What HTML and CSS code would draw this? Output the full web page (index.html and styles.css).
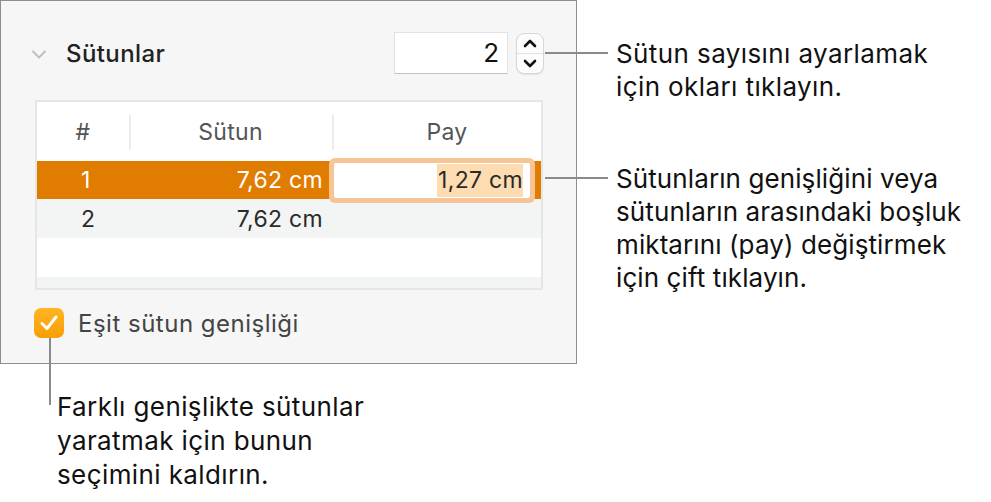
FILE: index.html
```html
<!DOCTYPE html>
<html lang="tr">
<head>
    <meta charset="UTF-8">
    <meta name="viewport" content="width=device-width, initial-scale=1.0">
    <title>Sütunlar</title>
    <link rel="stylesheet" href="styles.css">
</head>
<body>
    <div class="figure">
        <div class="panel">
            <div class="section-head">
                <svg class="disclosure" width="14" height="9" viewBox="0 0 14 9">
                    <path d="M1 1.5 L7 7.5 L13 1.5" fill="none" stroke="#bdbdbd" stroke-width="1.8" stroke-linecap="round" stroke-linejoin="round"/>
                </svg>
                <span class="section-title">Sütunlar</span>
                <div class="count-field">2</div>
                <div class="stepper">
                    <span class="step">
                        <svg width="14" height="9" viewBox="0 0 14 9"><path d="M2 7 L7 2 L12 7" fill="none" stroke="#111" stroke-width="2.6" stroke-linecap="round" stroke-linejoin="round"/></svg>
                    </span>
                    <span class="step">
                        <svg width="14" height="9" viewBox="0 0 14 9"><path d="M2 2 L7 7 L12 2" fill="none" stroke="#111" stroke-width="2.6" stroke-linecap="round" stroke-linejoin="round"/></svg>
                    </span>
                </div>
            </div>

            <div class="col-table">
                <div class="row head">
                    <div class="cell num">#</div>
                    <div class="cell width">Sütun</div>
                    <div class="cell gap">Pay</div>
                </div>
                <div class="row selected">
                    <div class="cell num">1</div>
                    <div class="cell width">7,62 cm</div>
                    <div class="cell gap">
                        <div class="edit-box"><span class="sel">1,27 cm</span></div>
                    </div>
                </div>
                <div class="row alt">
                    <div class="cell num">2</div>
                    <div class="cell width">7,62 cm</div>
                    <div class="cell gap"></div>
                </div>
                <div class="row"></div>
                <div class="row alt"></div>
            </div>

            <div class="check-row">
                <span class="checkbox">
                    <svg width="20" height="18" viewBox="0 0 20 18"><path d="M3 9.5 L8 14.5 L17 3" fill="none" stroke="#fff" stroke-width="3" stroke-linecap="round" stroke-linejoin="round"/></svg>
                </span>
                <span class="check-label">Eşit sütun genişliği</span>
            </div>
        </div>

        <div class="callout callout-steps">
            <span class="leader leader-h"></span>
            Sütun sayısını ayarlamak<br>için okları tıklayın.
        </div>
        <div class="callout callout-cells">
            <span class="leader leader-h"></span>
            Sütunların genişliğini veya<br>sütunların arasındaki boşluk<br>miktarını (pay) değiştirmek<br>için çift tıklayın.
        </div>
        <div class="callout callout-check">
            <span class="leader leader-v"></span>
            Farklı genişlikte sütunlar<br>yaratmak için bunun<br>seçimini kaldırın.
        </div>
    </div>
</body>
</html>
```

FILE: styles.css
```css
body {
    margin: 0;
    padding: 0;
    background: #fff;
    font-family: Inter, "Open Sans", sans-serif;
}
.figure {
    position: relative;
    width: 991px;
    height: 502px;
}
.panel {
    width: 577px;
    height: 364px;
    box-sizing: border-box;
    border: 1px solid #8e8e8e;
    background-color: #f6f6f6;
    padding-top: 31px;
}
.section-head {
    display: flex;
    align-items: center;
    height: 42px;
    padding-left: 31px;
    padding-right: 32px;
}
.disclosure {
    margin-top: 2px;
}
.section-title {
    margin-left: 20px;
    font-size: 24px;
    font-weight: 500;
    letter-spacing: 0.4px;
    color: #222;
}
.count-field {
    margin-left: auto;
    width: 114px;
    height: 42px;
    box-sizing: border-box;
    background: #fff;
    border: 1px solid #e2e2e2;
    border-bottom-color: #c4c4c4;
    text-align: right;
    padding-right: 8px;
    font-size: 26px;
    line-height: 40px;
    color: #111;
}
.stepper {
    margin-left: 8px;
    width: 28px;
    height: 41px;
    box-sizing: border-box;
    border: 1px solid #d6d6d6;
    border-radius: 8px;
    background: #fcfcfc;
    box-shadow: 0 1px 1px rgba(0, 0, 0, 0.08);
    display: flex;
    flex-direction: column;
}
.step {
    flex: 1;
    display: flex;
    align-items: center;
    justify-content: center;
}
.step:first-child {
    border-bottom: 1px solid #e2e2e2;
}
.col-table {
    margin: 26px 0 0 34px;
    width: 508px;
    height: 190px;
    box-sizing: border-box;
    border: 2px solid #e6e6e6;
    background: #fff;
    overflow: hidden;
}
.row {
    display: flex;
    height: 39px;
    font-size: 23px;
    letter-spacing: 0.3px;
    color: #2a2a2a;
}
.row.head {
    height: 59px;
    color: #555;
}
.row.selected {
    height: 38px;
    background-color: #e07c00;
    color: #fff;
}
.row.alt {
    background-color: #f3f4f4;
}
.cell {
    display: flex;
    align-items: center;
}
.cell.num {
    width: 92px;
    padding-left: 44px;
    box-sizing: border-box;
}
.cell.width {
    width: 203px;
    justify-content: flex-end;
    padding-right: 9px;
    box-sizing: border-box;
}
.cell.gap {
    flex: 1;
    position: relative;
}
.head .cell {
    justify-content: center;
    padding: 0;
}
.head .cell.width,
.head .cell.gap {
    position: relative;
}
.head .cell.width::before,
.head .cell.gap::before {
    content: "";
    position: absolute;
    left: 0;
    top: 13px;
    bottom: 11px;
    width: 2px;
    background: #ececec;
}
.head .cell.gap {
    padding-left: 21px;
}
.edit-box {
    position: absolute;
    left: 2px;
    top: 2px;
    width: 196px;
    height: 35px;
    background: #fff;
    border-radius: 2px;
    box-shadow: 0 0 0 5px #f7c495;
    display: flex;
    align-items: center;
    justify-content: flex-end;
    padding-right: 7px;
    box-sizing: border-box;
    color: #2a2a2a;
}
.sel {
    background: #fddcb1;
    padding: 2px 0 3px 1px;
}
.check-row {
    display: flex;
    align-items: center;
    margin: 18px 0 0 33px;
}
.checkbox {
    width: 30px;
    height: 30px;
    border-radius: 7px;
    background: linear-gradient(#ffb524, #f99d05);
    display: flex;
    align-items: center;
    justify-content: center;
}
.check-label {
    margin-left: 14px;
    font-size: 24px;
    letter-spacing: 0.5px;
    color: #444;
}

/* Annotations */
.callout {
    position: absolute;
    font-size: 26px;
    letter-spacing: 0.4px;
    line-height: 33px;
    color: #111;
}
.callout-steps {
    left: 616px;
    top: 37px;
}
.callout-cells {
    left: 616px;
    top: 162px;
    letter-spacing: 0.1px;
}
.callout-check {
    left: 57px;
    top: 390px;
    line-height: 34px;
}
.leader {
    position: absolute;
    background: #8a8a8a;
}
.leader-h {
    left: -71px;
    top: 15px;
    width: 63px;
    height: 2px;
}
.leader-v {
    left: -8px;
    top: -52px;
    width: 2px;
    height: 67px;
}
```
